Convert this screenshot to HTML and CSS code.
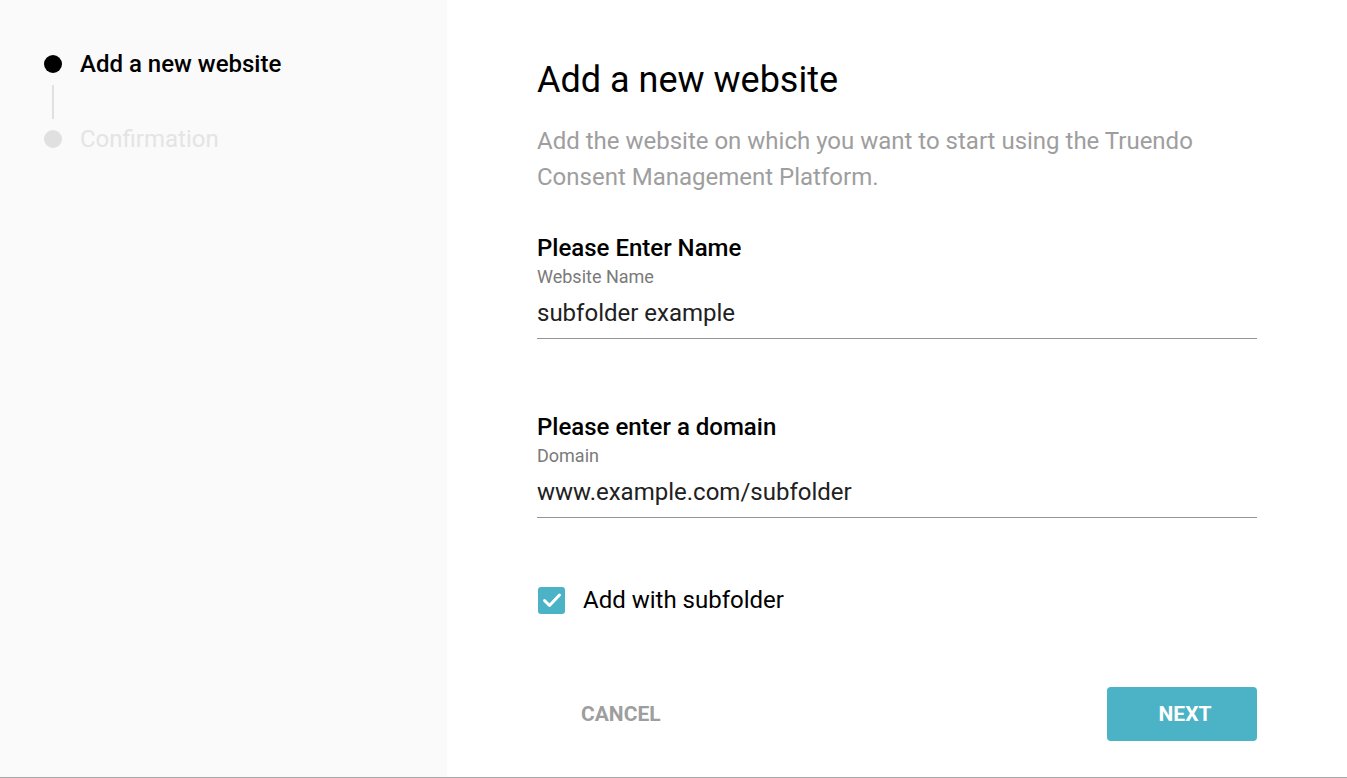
FILE: index.html
```html
<!DOCTYPE html>
<html lang="en">
<head>
<meta charset="utf-8">
<title>Add a new website</title>
<link rel="stylesheet" href="styles.css">
</head>
<body>
<div class="page">
  <aside class="sidebar">
    <ol class="steps">
      <li class="step active"><span class="dot"></span><span class="step-label">Add a new website</span></li>
      <li class="connector"></li>
      <li class="step"><span class="dot"></span><span class="step-label">Confirmation</span></li>
    </ol>
  </aside>
  <main class="main">
    <div class="form">
      <h1 class="title">Add a new website</h1>
      <p class="desc">Add the website on which you want to start using the Truendo Consent Management Platform.</p>

      <div class="field">
        <div class="field-title">Please Enter Name</div>
        <label class="field-label">Website Name</label>
        <div class="field-input">subfolder example</div>
      </div>

      <div class="field field-second">
        <div class="field-title">Please enter a domain</div>
        <label class="field-label">Domain</label>
        <div class="field-input">www.example.com/subfolder</div>
      </div>

      <div class="check-row">
        <span class="checkbox">
          <svg viewBox="0 0 24 24" width="24" height="24"><path d="M4.5 12.5l5 5L19.5 7" fill="none" stroke="#fff" stroke-width="3" stroke-linecap="round" stroke-linejoin="round"/></svg>
        </span>
        <span class="check-label">Add with subfolder</span>
      </div>

      <div class="actions">
        <button class="btn btn-cancel">CANCEL</button>
        <button class="btn btn-next">NEXT</button>
      </div>
    </div>
  </main>
</div>
</body>
</html>
```

FILE: styles.css
```css
html, body {
  margin: 0;
  padding: 0;
  background: #ffffff;
  font-family: Roboto, "Liberation Sans", Arial, sans-serif;
}

.page {
  display: flex;
  height: 777px;
  border-bottom: 1px solid #a8a8a8;
}

.sidebar {
  width: 447px;
  flex: 0 0 447px;
  background: #fafafa;
}

.steps {
  list-style: none;
  margin: 0;
  padding: 50px 0 0 44px;
}

.step {
  display: flex;
  align-items: center;
  height: 28px;
}

.dot {
  width: 18px;
  height: 18px;
  border-radius: 50%;
  background: #e0e0e0;
  flex: 0 0 18px;
}

.step-label {
  margin-left: 18px;
  font-size: 24px;
  font-weight: 500;
  color: #e4e4e4;
}

.step.active .dot {
  background: #000;
}

.step.active .step-label {
  color: #000;
}

.step:not(.active) .step-label {
  font-weight: 400;
}

.connector {
  width: 2px;
  height: 34px;
  background: #e0e0e0;
  margin: 7px 0 6px 8px;
}

.main {
  flex: 1;
  padding-left: 90px;
}

.form {
  width: 720px;
  padding-top: 58px;
}

.title {
  margin: 0;
  font-size: 36px;
  font-weight: 400;
  line-height: 44px;
  color: #000;
}

.desc {
  margin: 21px 0 0;
  font-size: 24px;
  line-height: 36px;
  color: #9e9e9e;
}

.field {
  margin-top: 38px;
}

.field-second {
  margin-top: 73px;
}

.field-title {
  font-size: 24px;
  font-weight: 500;
  line-height: 30px;
  color: #000;
}

.field-label {
  display: block;
  font-size: 18px;
  line-height: 24px;
  padding-top: 2px;
  color: #7a7a7a;
}

.field-input {
  font-size: 24px;
  line-height: 30px;
  color: #212121;
  padding: 9px 0 10px;
  border-bottom: 1px solid #949494;
}

.check-row {
  display: flex;
  align-items: center;
  margin-top: 68px;
}

.checkbox {
  width: 27px;
  height: 27px;
  border-radius: 3px;
  background: #4bb3c5;
  display: flex;
  align-items: center;
  justify-content: center;
  margin-left: 1px;
}

.check-label {
  margin-left: 18px;
  font-size: 24px;
  color: #000;
}

.actions {
  display: flex;
  justify-content: space-between;
  align-items: center;
  margin-top: 73px;
}

.btn {
  font-family: Roboto, "Liberation Sans", Arial, sans-serif;
  font-size: 21px;
  font-weight: 700;
  border: none;
  cursor: pointer;
}

.btn-cancel {
  background: transparent;
  color: #9e9e9e;
  padding: 0 44px;
  height: 54px;
}

.btn-next {
  background: #4bb3c5;
  color: #fff;
  width: 150px;
  height: 54px;
  padding: 0 0 0 6px;
  border-radius: 4px;
}
```
